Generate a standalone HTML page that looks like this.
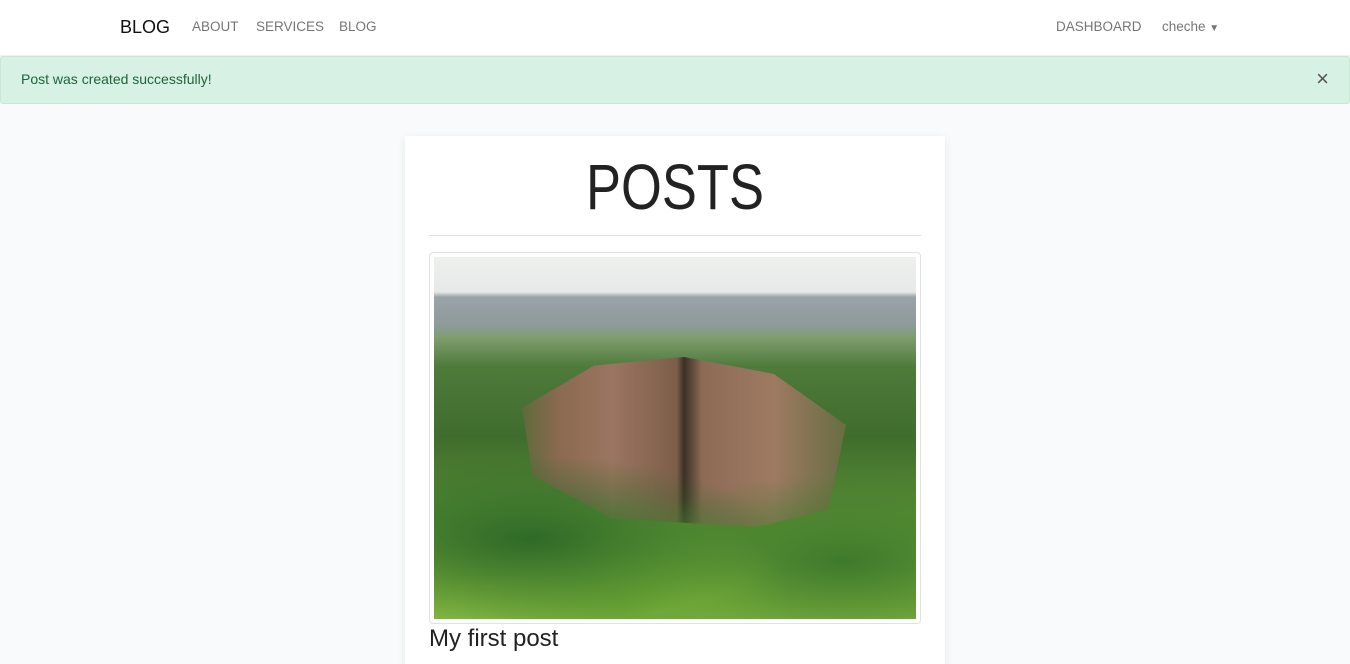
<!DOCTYPE html>
<html><head><meta charset="utf-8"><style>
*{box-sizing:border-box;margin:0;padding:0}
html,body{width:1350px;height:664px;overflow:hidden}
body{background:#f8fafc;font-family:"Liberation Sans",sans-serif;color:#212529;position:relative}
.nav{position:absolute;left:0;top:0;width:1350px;height:55px;background:#fff;box-shadow:0 1px 2px rgba(0,0,0,.06)}
.nav span{position:absolute;top:19px;font-size:13.5px;color:rgba(0,0,0,.55)}
.brand{left:120px!important;top:17px!important;font-size:18px!important;color:#111!important}
.alert{position:absolute;left:0;top:56px;width:1350px;height:48px;background:#d7f1e4;border:1px solid #c6e9d4;border-radius:3px;color:#1d643b;font-size:14px;padding:14px 20px}
.x{position:absolute;right:20px;top:9px;font-size:22px;color:#555}
.card{position:absolute;left:405px;top:136px;width:540px;height:540px;background:#fff;box-shadow:0 2px 8px rgba(0,0,0,.08)}
h1{position:absolute;left:0;width:540px;top:14px;text-align:center;font-weight:400;font-size:64px;color:#222;transform:scaleX(0.82)}
.hr{position:absolute;left:24px;top:99px;width:492px;height:1px;background:#dee2e6}
.thumb{position:absolute;left:24px;top:116px;width:492px;height:372px;border:1px solid #dee2e6;border-radius:4px;padding:4px}
.img{width:482px;height:362px;position:relative;overflow:hidden;background:linear-gradient(#eef0ee 0,#e6e9e8 35px,#9aa3a8 40px,#8e9a9c 68px,#7f9e6f 80px,#4e7a3a 110px,#3f6d2e 180px,#5a8f34 260px,#78ad3c 330px,#7fb441 362px)}
.cliff{position:absolute;left:70px;top:100px;width:360px;height:170px;background:linear-gradient(90deg,#4a6a30 0,#8a6a50 15%,#9b7560 30%,#7d5e48 48%,#3a3026 50%,#8c6b55 55%,#9e7a62 75%,#5a6a3a 100%);clip-path:polygon(5% 30%,25% 5%,50% 0,75% 10%,95% 40%,90% 90%,70% 100%,30% 95%,8% 70%)}
.t1{position:absolute;left:0;top:150px;width:482px;height:220px;background:radial-gradient(ellipse at 20% 60%,#2f6a28 0,transparent 45%),radial-gradient(ellipse at 40% 90%,#6aa535 0,transparent 40%),radial-gradient(ellipse at 85% 70%,#3f7a2c 0,transparent 40%)}
.title{position:absolute;left:24px;top:489px;font-size:24px;color:#222}
</style></head><body>
<div class="nav"><span class="brand">BLOG</span><span style="left:192px">ABOUT</span><span style="left:256px">SERVICES</span><span style="left:339px">BLOG</span><span style="left:1056px">DASHBOARD</span><span style="left:1162px">cheche <span style="position:static;font-size:10px">▼</span></span></div>
<div class="alert">Post was created successfully!<span class="x">×</span></div>
<div class="card"><h1>POSTS</h1><div class="hr"></div>
<div class="thumb"><div class="img"><div class="cliff"></div><div class="t1"></div></div></div>
<div class="title">My first post</div></div>
</body></html>
